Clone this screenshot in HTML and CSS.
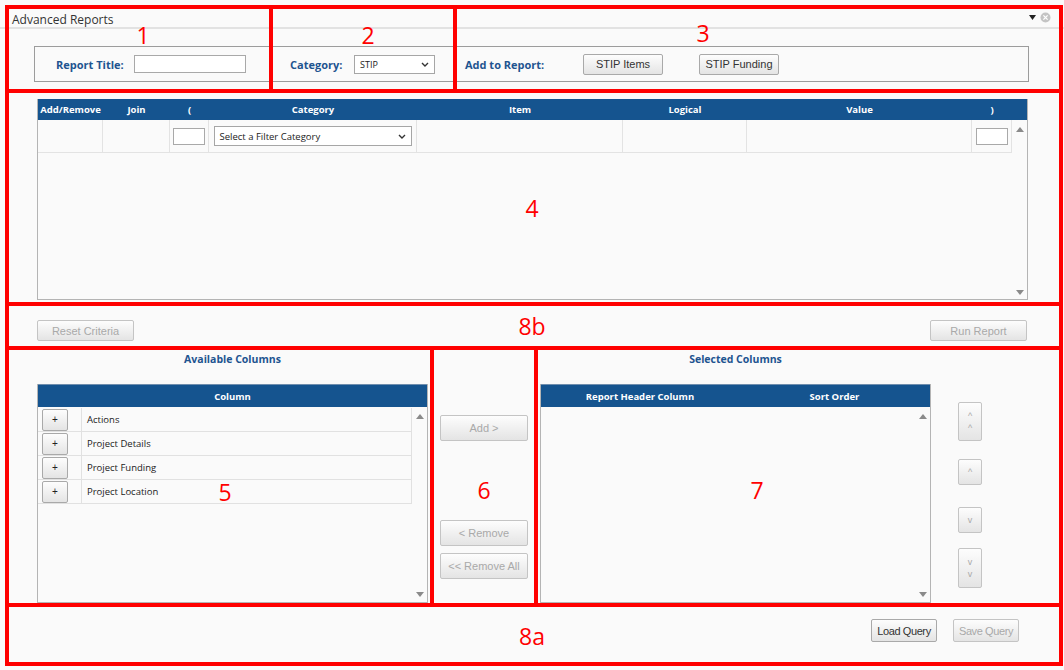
FILE: index.html
```html
<!DOCTYPE html>
<html lang="en">

<head>
    <meta charset="UTF-8">
    <meta name="viewport" content="width=device-width, initial-scale=1.0">
    <title>Advanced Reports</title>
    <link rel="stylesheet" href="styles.css">
</head>

<body>
    <div class="window">
        <div class="titlebar">
            <span>Advanced Reports</span>
            <span class="tb-icons">
                <svg width="7" height="5" viewBox="0 0 7 5"><path d="M0 0h7L3.5 5z" fill="#222"/></svg>
                <svg width="11" height="11" viewBox="0 0 11 11">
                    <circle cx="5.5" cy="5.5" r="5" fill="#c4c4c4"/>
                    <path d="M3.4 3.4l4.2 4.2M7.6 3.4l-4.2 4.2" stroke="#fff" stroke-width="1.3"/>
                </svg>
            </span>
        </div>

        <div class="report-bar">
            <label class="lbl lbl-title" for="title">Report Title:</label>
            <input type="text" id="title" class="txt-title">
            <label class="lbl lbl-cat">Category:</label>
            <span class="select sel-cat">STIP<svg width="8" height="5" viewBox="0 0 8 5"><path d="M1 1l3 3 3-3" fill="none" stroke="#333" stroke-width="1.4"/></svg></span>
            <span class="lbl lbl-add">Add to Report:</span>
            <button class="btn btn-stip">STIP Items</button>
            <button class="btn btn-stip btn-fund">STIP Funding</button>
        </div>

        <div class="filter-box">
            <div class="filter-head">
                <div>Add/Remove</div>
                <div>Join</div>
                <div>(</div>
                <div>Category</div>
                <div>Item</div>
                <div>Logical</div>
                <div>Value</div>
                <div>)</div>
                <div></div>
            </div>
            <div class="filter-body">
                <div class="filter-rows">
                    <div class="filter-row">
                        <div></div>
                        <div></div>
                        <div><input type="text" class="paren"></div>
                        <div><span class="select sel-filter">Select a Filter Category<svg width="8" height="5" viewBox="0 0 8 5"><path d="M1 1l3 3 3-3" fill="none" stroke="#333" stroke-width="1.4"/></svg></span></div>
                        <div></div>
                        <div></div>
                        <div></div>
                        <div><input type="text" class="paren"></div>
                    </div>
                </div>
                <div class="scroll">
                    <span class="arrow-up"></span>
                    <span class="arrow-down"></span>
                </div>
            </div>
        </div>

        <div class="action-bar">
            <button class="btn disabled btn-wide">Reset Criteria</button>
            <button class="btn disabled btn-wide">Run Report</button>
        </div>

        <div class="columns">
            <div class="col-panel">
                <div class="panel-title">Available Columns</div>
                <div class="list">
                    <div class="list-head">Column</div>
                    <div class="list-body">
                        <div class="list-rows">
                            <div class="col-row"><div class="add-cell"><button class="btn btn-plus">+</button></div><span>Actions</span></div>
                            <div class="col-row"><div class="add-cell"><button class="btn btn-plus">+</button></div><span>Project Details</span></div>
                            <div class="col-row"><div class="add-cell"><button class="btn btn-plus">+</button></div><span>Project Funding</span></div>
                            <div class="col-row"><div class="add-cell"><button class="btn btn-plus">+</button></div><span>Project Location</span></div>
                        </div>
                        <div class="scroll">
                            <span class="arrow-up"></span>
                            <span class="arrow-down"></span>
                        </div>
                    </div>
                </div>
            </div>

            <div class="mid">
                <button class="btn disabled btn-mid btn-add">Add &gt;</button>
                <button class="btn disabled btn-mid btn-remove">&lt; Remove</button>
                <button class="btn disabled btn-mid btn-remove-all">&lt;&lt; Remove All</button>
            </div>

            <div class="col-panel sel-panel">
                <div class="panel-title">Selected Columns</div>
                <div class="list">
                    <div class="list-head sel-head">
                        <div>Report Header Column</div>
                        <div>Sort Order</div>
                    </div>
                    <div class="list-body">
                        <div class="list-rows"></div>
                        <div class="scroll">
                            <span class="arrow-up"></span>
                            <span class="arrow-down"></span>
                        </div>
                    </div>
                </div>
            </div>

            <div class="side">
                <button class="btn disabled btn-side btn-top">^<br>^</button>
                <button class="btn disabled btn-side btn-up">^</button>
                <button class="btn disabled btn-side btn-down">v</button>
                <button class="btn disabled btn-side btn-bottom">v<br>v</button>
            </div>
        </div>

        <div class="query-bar">
            <button class="btn btn-query">Load Query</button>
            <button class="btn disabled btn-query">Save Query</button>
        </div>

        <!-- annotation frames drawn over the screen -->
        <div class="notes">
            <div class="box b1"></div>
            <div class="box b2"></div>
            <div class="box b3"></div>
            <div class="box b4"></div>
            <div class="box b8b"></div>
            <div class="box b5"></div>
            <div class="box b6"></div>
            <div class="box b7"></div>
            <div class="box b8a"></div>
            <span class="num n1">1</span>
            <span class="num n2">2</span>
            <span class="num n3">3</span>
            <span class="num n4">4</span>
            <span class="num n8b">8b</span>
            <span class="num n5">5</span>
            <span class="num n6">6</span>
            <span class="num n7">7</span>
            <span class="num n8a">8a</span>
        </div>
    </div>
</body>

</html>
```

FILE: styles.css
```css
* {
    margin: 0;
    padding: 0;
    box-sizing: border-box;
}

body {
    background-color: #fff;
    font-family: "Open Sans", "Liberation Sans", sans-serif;
}

.window {
    position: relative;
    width: 1064px;
    height: 670px;
    background-color: #fafafa;
    overflow: hidden;
}

.titlebar {
    height: 29px;
    padding: 12px 13px 0 12px;
    border-bottom: 2px solid #e2e2e2;
    font-size: 12px;
    line-height: 16px;
    color: #333;
    display: flex;
    justify-content: space-between;
}

.tb-icons {
    display: flex;
    align-items: center;
    gap: 4px;
    height: 10px;
}

/* report title bar */
.report-bar {
    margin: 17px 35px 0 34px;
    height: 36px;
    border: 1px solid #9c9c9c;
    display: flex;
    align-items: center;
}

.lbl {
    font-size: 11px;
    font-weight: 700;
    color: #1e5490;
}

.lbl-title {
    margin-left: 21px;
    width: 78px;
}

.txt-title {
    width: 112px;
    height: 18px;
    border: 1px solid #a9a9a9;
    background-color: #fff;
}

.lbl-cat {
    margin-left: 44px;
    width: 64px;
}

.select {
    display: inline-flex;
    align-items: center;
    justify-content: space-between;
    border: 1px solid #a6a6a6;
    background-color: #fff;
    font-size: 9px;
    color: #222;
    padding: 0 5px 0 5px;
}

.sel-cat {
    width: 81px;
    height: 19px;
}

.lbl-add {
    margin-left: 30px;
    width: 118px;
}

.btn {
    font-family: "Liberation Sans", Arial, sans-serif;
    font-size: 11px;
    color: #333;
    background: linear-gradient(#fdfdfd, #e4e4e4);
    border: 1px solid #a9a9a9;
    border-radius: 2px;
}

.btn.disabled {
    color: #a9a9a9;
    border-color: #c4c4c4;
}

.btn-stip {
    width: 80px;
    height: 21px;
}

.btn-fund {
    margin-left: 36px;
}

/* filter criteria grid */
.filter-box {
    margin: 17px 36px 0 37px;
    height: 201px;
    border: 1px solid #b4b4b4;
    border-top: none;
}

.filter-head {
    display: grid;
    grid-template-columns: 65px 67px 39px 208px 206px 124px 225px 40px 15px;
    height: 21px;
    background-color: #15548f;
    color: white;
    font-size: 9.5px;
    font-weight: 700;
    align-items: center;
    text-align: center;
}

.filter-body {
    display: flex;
    height: 180px;
}

.filter-rows {
    flex: 1;
}

.filter-row {
    display: grid;
    grid-template-columns: 65px 67px 39px 208px 206px 124px 225px 40px;
    height: 33px;
}

.filter-row > div {
    border-right: 1px solid #e3e3e3;
    border-bottom: 1px solid #e3e3e3;
    display: flex;
    align-items: center;
    justify-content: center;
}

.paren {
    width: 32px;
    height: 17px;
    border: 1px solid #a9a9a9;
    background-color: #fff;
}

.sel-filter {
    width: 198px;
    height: 20px;
    font-size: 9.5px;
}

.scroll {
    width: 15px;
    display: flex;
    flex-direction: column;
    justify-content: space-between;
    align-items: center;
    padding: 7px 0 5px;
}

.arrow-up,
.arrow-down {
    width: 0;
    height: 0;
    border-left: 4px solid transparent;
    border-right: 4px solid transparent;
}

.arrow-up {
    border-bottom: 5px solid #8a8a8a;
}

.arrow-down {
    border-top: 5px solid #8a8a8a;
}

.action-bar {
    display: flex;
    justify-content: space-between;
    margin: 20px 37px 0 37px;
}

.btn-wide {
    width: 97px;
    height: 21px;
}

/* column pickers */
.columns {
    display: flex;
    margin-top: 9px;
    padding-left: 37px;
}

.col-panel {
    width: 391px;
}

.sel-panel {
    margin-left: 12px;
}

.panel-title {
    height: 18px;
    line-height: 18px;
    margin-bottom: 16px;
    text-align: center;
    font-size: 10.5px;
    font-weight: 700;
    color: #1e5490;
}

.list {
    height: 219px;
    border: 1px solid #b4b4b4;
    border-top: none;
    display: flex;
    flex-direction: column;
}

.list-head {
    height: 23px;
    background-color: #15548f;
    border-top: 1px solid #6f8eae;
    color: white;
    font-size: 9.5px;
    font-weight: 700;
    display: flex;
    align-items: center;
    justify-content: center;
}

.sel-head {
    display: grid;
    grid-template-columns: 198px 1fr;
    text-align: center;
}

.list-body {
    flex: 1;
    display: flex;
}

.list-rows {
    flex: 1;
    padding-top: 1px;
}

.col-row {
    display: flex;
    align-items: center;
    height: 24px;
    border-bottom: 1px solid #e1e1e1;
    border-right: 1px solid #e1e1e1;
    font-size: 9.5px;
    color: #222;
}

.add-cell {
    width: 44px;
    height: 100%;
    padding-left: 4px;
    border-right: 1px solid #e1e1e1;
    display: flex;
    align-items: center;
}

.col-row span {
    padding-left: 5px;
}

.btn-plus {
    width: 26px;
    height: 22px;
    font-size: 10px;
    color: #222;
}

.mid {
    width: 88px;
    margin-left: 12px;
    display: flex;
    flex-direction: column;
}

.btn-mid {
    height: 26px;
    font-size: 11px;
}

.btn-add {
    margin-top: 65px;
}

.btn-remove {
    margin-top: 79px;
}

.btn-remove-all {
    margin-top: 7px;
}

.side {
    width: 24px;
    margin-left: 27px;
    display: flex;
    flex-direction: column;
}

.btn-side {
    width: 24px;
    height: 26px;
    font-size: 9px;
    line-height: 12px;
}

.btn-top {
    height: 39px;
    margin-top: 52px;
}

.btn-up {
    margin-top: 18px;
}

.btn-down {
    margin-top: 22px;
}

.btn-bottom {
    height: 40px;
    margin-top: 15px;
}

.query-bar {
    display: flex;
    justify-content: flex-end;
    gap: 16px;
    margin: 16px 45px 0 0;
}

.btn-query {
    width: 66px;
    height: 23px;
    font-size: 11px;
    letter-spacing: -0.4px;
}

/* red annotation overlay */
.notes {
    position: absolute;
    top: 0;
    left: 0;
    width: 100%;
    height: 100%;
    pointer-events: none;
}

.box {
    position: absolute;
    border: 4px solid #ff0000;
}

.b1 { left: 5px; top: 5px; width: 268px; height: 88px; }
.b2 { left: 269px; top: 5px; width: 188px; height: 88px; }
.b3 { left: 453px; top: 5px; width: 610px; height: 88px; }
.b4 { left: 5px; top: 89px; width: 1058px; height: 217px; }
.b8b { left: 5px; top: 302px; width: 1058px; height: 48px; }
.b5 { left: 5px; top: 346px; width: 429px; height: 261px; }
.b6 { left: 430px; top: 346px; width: 108px; height: 261px; }
.b7 { left: 534px; top: 346px; width: 529px; height: 261px; }
.b8a { left: 5px; top: 603px; width: 1058px; height: 63px; }

.num {
    position: absolute;
    color: #ff0000;
    font-family: "Open Sans", sans-serif;
    font-size: 23px;
    line-height: 1;
    transform: translate(-50%, -50%);
}

.n1 { left: 143px; top: 35px; }
.n2 { left: 368px; top: 35px; }
.n3 { left: 703px; top: 33px; }
.n4 { left: 532px; top: 208px; }
.n8b { left: 532px; top: 326px; }
.n5 { left: 225px; top: 492px; }
.n6 { left: 484px; top: 490px; }
.n7 { left: 757px; top: 490px; }
.n8a { left: 532px; top: 636px; }
```
